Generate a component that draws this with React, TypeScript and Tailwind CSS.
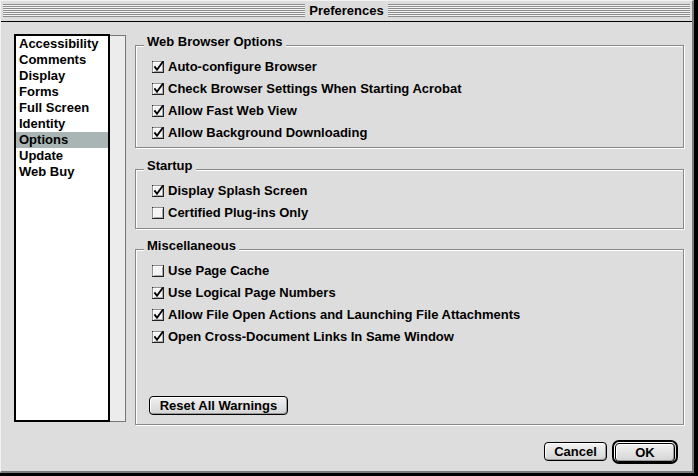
import type { ReactNode } from "react";

const categories = [
  "Accessibility",
  "Comments",
  "Display",
  "Forms",
  "Full Screen",
  "Identity",
  "Options",
  "Update",
  "Web Buy",
];

function CheckBox({ checked }: { checked: boolean }) {
  return (
    <svg width="12" height="12" viewBox="0 0 12 12" className="shrink-0 overflow-visible">
      <rect x="0.5" y="0.5" width="11" height="11" fill="#f4f4f4" stroke="#222" />
      <path d="M1 11V1h10" fill="none" stroke="#fff" />
      <path d="M2 10.5h9M10.5 2v9" fill="none" stroke="#aaa" />
      {checked && (
        <path d="M2.4 5.4 L5 8.8 L11 0.4" fill="none" stroke="#000" strokeWidth="1.8" />
      )}
    </svg>
  );
}

function Option({ label, checked }: { label: string; checked: boolean }) {
  return (
    <div className="h-[22px] flex items-center gap-[4px]">
      <CheckBox checked={checked} />
      <span>{label}</span>
    </div>
  );
}

function Group({
  title,
  className,
  children,
}: {
  title: string;
  className?: string;
  children: ReactNode;
}) {
  return (
    <div
      className={`border border-[#888] shadow-[inset_1px_1px_0_#fff,1px_1px_0_#fff] pl-[16px] ${className ?? ""}`}
    >
      <div className="-mt-[12px] mb-[6px] ml-[-8px] w-fit h-[16px] leading-[16px] px-[3px] bg-[#dddddd]">
        {title}
      </div>
      {children}
    </div>
  );
}

function MacButton({ children, className }: { children: ReactNode; className?: string }) {
  return (
    <button
      className={`h-[19px] rounded-[4px] border border-black bg-[linear-gradient(#f2f2f2,#d4d4d4)] shadow-[inset_-1px_-1px_0_#999,inset_1px_1px_0_#fff] leading-[17px] text-[13px] font-bold ${className ?? ""}`}
    >
      {children}
    </button>
  );
}

export default function App() {
  return (
    <div className="w-[698px] h-[476px] bg-black font-['Liberation_Sans',Arial,sans-serif] text-[13px] font-bold text-black">
      <div className="w-[694px] h-[473px] flex flex-col bg-[#dddddd] border-l border-t border-[#f2f2f2] border-r-2 border-b-2 border-r-[#7a7a7a] border-b-[#7a7a7a]">
        {/* title bar */}
        <div className="h-[21px] flex items-center px-[2px] pb-[1px] border-b border-black">
          <div className="flex-1 h-[13px] bg-[repeating-linear-gradient(to_bottom,#8c8c8c_0px,#8c8c8c_1px,#f4f4f4_1px,#f4f4f4_2px)]" />
          <div className="px-[4px] text-[13px] leading-[16px]">Preferences</div>
          <div className="flex-1 h-[13px] bg-[repeating-linear-gradient(to_bottom,#8c8c8c_0px,#8c8c8c_1px,#f4f4f4_1px,#f4f4f4_2px)]" />
        </div>

        <div className="flex-1 flex flex-col pl-[13px] pt-[13px]">
          <div className="flex gap-[9px]">
            {/* list */}
            <div className="flex h-[387px]">
              <div className="w-[96px] bg-white border-2 border-black flex flex-col -mt-[1px]">
                {categories.map((c) => (
                  <div
                    key={c}
                    className={`h-[16px] leading-[16px] pl-[3px] ${c === "Options" ? "bg-[#a9b5b5]" : ""}`}
                  >
                    {c}
                  </div>
                ))}
              </div>
              <div className="w-[16px] bg-[#ececec] border-t border-r border-b border-[#777]" />
            </div>

            {/* groups */}
            <div className="w-[549px] flex flex-col pt-[10px]">
              <Group title="Web Browser Options" className="pb-[3px]">
                <Option label="Auto-configure Browser" checked />
                <Option label="Check Browser Settings When Starting Acrobat" checked />
                <Option label="Allow Fast Web View" checked />
                <Option label="Allow Background Downloading" checked />
              </Group>
              <Group title="Startup" className="mt-[21px] pb-[4px]">
                <Option label="Display Splash Screen" checked />
                <Option label="Certified Plug-ins Only" checked={false} />
              </Group>
              <Group title="Miscellaneous" className="mt-[20px] pb-[8px]">
                <Option label="Use Page Cache" checked={false} />
                <Option label="Use Logical Page Numbers" checked />
                <Option label="Allow File Open Actions and Launching File Attachments" checked />
                <Option label="Open Cross-Document Links In Same Window" checked />
                <MacButton className="mt-[48px] -ml-[3px] w-[139px]">Reset All Warnings</MacButton>
              </Group>
            </div>
          </div>

          {/* dialog buttons */}
          <div className="flex justify-end items-center gap-[5px] mt-[15px] pr-[14px]">
            <MacButton className="w-[63px]">Cancel</MacButton>
            <div className="w-[66px] h-[24px] rounded-[7px] border-[2px] border-black bg-[#dddddd] p-[1px] shadow-[inset_1px_1px_0_#fff]">
              <MacButton className="w-full">OK</MacButton>
            </div>
          </div>
        </div>
      </div>
    </div>
  );
}
